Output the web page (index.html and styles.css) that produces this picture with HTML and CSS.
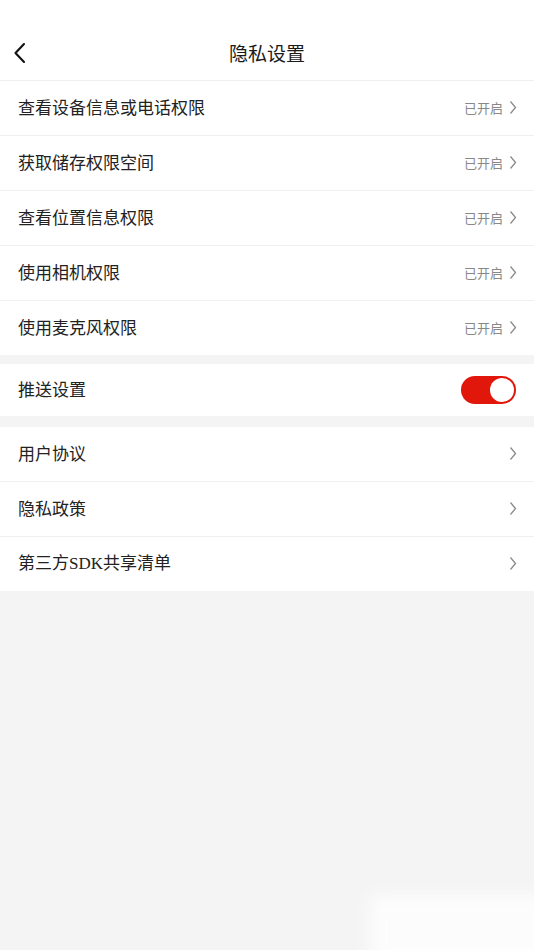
FILE: index.html
```html
<!DOCTYPE html>
<html lang="zh">
<head>
<meta charset="utf-8">
<title>隐私设置</title>
<link rel="stylesheet" href="styles.css">
</head>
<body>
<div class="page">
  <header class="header">
    <svg class="back" width="16" height="22" viewBox="0 0 16 22"><path d="M12 2 L3.5 11 L12 20" fill="none" stroke="#111" stroke-width="2.1" stroke-linecap="round" stroke-linejoin="round"/></svg>
    <h1 class="title">隐私设置</h1>
  </header>

  <section class="group">
    <div class="row"><span class="label">查看设备信息或电话权限</span><span class="right"><span class="status">已开启</span><svg class="chev" width="8" height="15" viewBox="0 0 8 15"><path d="M1.5 1.5 L6.5 7.5 L1.5 13.5" fill="none" stroke="#8a8a8a" stroke-width="1.3"/></svg></span></div>
    <div class="row"><span class="label">获取储存权限空间</span><span class="right"><span class="status">已开启</span><svg class="chev" width="8" height="15" viewBox="0 0 8 15"><path d="M1.5 1.5 L6.5 7.5 L1.5 13.5" fill="none" stroke="#8a8a8a" stroke-width="1.3"/></svg></span></div>
    <div class="row"><span class="label">查看位置信息权限</span><span class="right"><span class="status">已开启</span><svg class="chev" width="8" height="15" viewBox="0 0 8 15"><path d="M1.5 1.5 L6.5 7.5 L1.5 13.5" fill="none" stroke="#8a8a8a" stroke-width="1.3"/></svg></span></div>
    <div class="row"><span class="label">使用相机权限</span><span class="right"><span class="status">已开启</span><svg class="chev" width="8" height="15" viewBox="0 0 8 15"><path d="M1.5 1.5 L6.5 7.5 L1.5 13.5" fill="none" stroke="#8a8a8a" stroke-width="1.3"/></svg></span></div>
    <div class="row last"><span class="label">使用麦克风权限</span><span class="right"><span class="status">已开启</span><svg class="chev" width="8" height="15" viewBox="0 0 8 15"><path d="M1.5 1.5 L6.5 7.5 L1.5 13.5" fill="none" stroke="#8a8a8a" stroke-width="1.3"/></svg></span></div>
  </section>

  <section class="group push">
    <div class="row last push-row"><span class="label">推送设置</span><span class="toggle"><span class="knob"></span></span></div>
  </section>

  <section class="group third">
    <div class="row"><span class="label">用户协议</span><span class="right"><svg class="chev" width="8" height="15" viewBox="0 0 8 15"><path d="M1.5 1.5 L6.5 7.5 L1.5 13.5" fill="none" stroke="#8a8a8a" stroke-width="1.3"/></svg></span></div>
    <div class="row"><span class="label">隐私政策</span><span class="right"><svg class="chev" width="8" height="15" viewBox="0 0 8 15"><path d="M1.5 1.5 L6.5 7.5 L1.5 13.5" fill="none" stroke="#8a8a8a" stroke-width="1.3"/></svg></span></div>
    <div class="row last"><span class="label">第三方<span class="latin">SDK</span>共享清单</span><span class="right"><svg class="chev" width="8" height="15" viewBox="0 0 8 15"><path d="M1.5 1.5 L6.5 7.5 L1.5 13.5" fill="none" stroke="#8a8a8a" stroke-width="1.3"/></svg></span></div>
  </section>

  <div class="glow"></div>
</div>
</body>
</html>
```

FILE: styles.css
```css
html, body {
  margin: 0;
  padding: 0;
  background: #f4f4f4;
}
body {
  font-family: "Noto Sans CJK SC", "Noto Sans", sans-serif;
  color: #222;
}
.page {
  width: 534px;
  min-height: 950px;
  position: relative;
  overflow: hidden;
}
.header {
  background: #fff;
  height: 54px;
  padding-top: 26px;
  display: flex;
  align-items: center;
  justify-content: center;
  position: relative;
  border-bottom: 1px solid #f0f0f0;
}
.back {
  position: absolute;
  left: 12px;
  top: 42px;
}
.title {
  margin: 0;
  font-size: 19px;
  font-weight: 400;
  line-height: 54px;
  color: #1a1a1a;
}
.group {
  background: #fff;
}
.push {
  margin-top: 9px;
}
.third {
  margin-top: 11px;
}
.row {
  height: 54px;
  border-bottom: 1px solid #f0f0f0;
  display: flex;
  align-items: center;
  justify-content: space-between;
  padding: 0 17px 0 18px;
}
.row.last {
  border-bottom: none;
  height: 54px;
}
.push-row {
  height: 52px !important;
}
.label {
  font-size: 17px;
  line-height: 24px;
  color: #222;
  margin-top: -3px;
}
.latin {
  font-family: "Liberation Serif", serif;
  font-size: 17px;
}
.right {
  display: flex;
  align-items: center;
  gap: 6px;
  margin-top: -2px;
}
.status {
  font-size: 13px;
  color: #888;
}
.chev {
  display: block;
}
.toggle {
  width: 55px;
  height: 28px;
  border-radius: 14px;
  background: #e1170b;
  position: relative;
  margin-right: 1px;
}
.knob {
  position: absolute;
  right: 2px;
  top: 2px;
  width: 24px;
  height: 24px;
  border-radius: 50%;
  background: #fff;
}
.glow {
  position: absolute;
  left: 370px;
  top: 895px;
  width: 180px;
  height: 70px;
  background: #fff;
  filter: blur(8px);
  opacity: 0.8;
}
```
